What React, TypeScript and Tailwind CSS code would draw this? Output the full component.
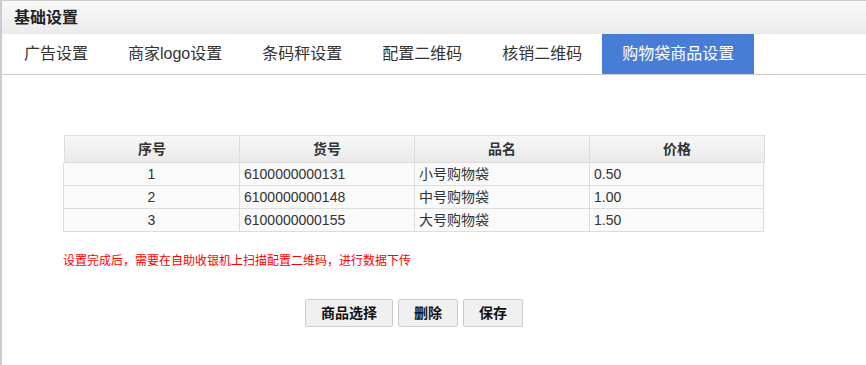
import React from "react";

const font = { fontFamily: '"Liberation Sans", "Noto Sans CJK SC", sans-serif' };

const tabs = ["广告设置", "商家logo设置", "条码秤设置", "配置二维码", "核销二维码", "购物袋商品设置"];
const rows = [
  ["1", "6100000000131", "小号购物袋", "0.50"],
  ["2", "6100000000148", "中号购物袋", "1.00"],
  ["3", "6100000000155", "大号购物袋", "1.50"],
];
const heads = ["序号", "货号", "品名", "价格"];

export default function App() {
  return (
    <div
      className="w-[866px] h-[365px] overflow-hidden bg-white border-l-2 border-t border-[#cccccc] text-[#333333]"
      style={font}
    >
      <div className="h-[33px] pl-[12px] flex items-center bg-gradient-to-b from-[#f9f9f9] to-[#ebebeb] text-[16px] font-bold text-[#222222]">
        基础设置
      </div>
      <div className="flex h-[41px] pl-[2px] border-b border-[#cccccc]">
        {tabs.map((t, i) => (
          <div
            key={t}
            className={
              i === tabs.length - 1
                ? "h-[40px] px-[20px] flex items-center text-[16px] bg-[#477dd5] text-white"
                : "h-[40px] px-[20px] flex items-center text-[16px] text-[#333333]"
            }
          >
            {t}
          </div>
        ))}
      </div>
      <div className="ml-[61px] pt-[60px] w-[702px]">
        <div className="grid grid-cols-[176px_175px_175px_175px] pl-[1px]">
          {heads.map((h, i) => (
            <div
              key={h}
              className={
                "h-[28px] flex items-center justify-center text-[14px] font-bold border-t border-b border-r border-[#dddddd] bg-gradient-to-b from-[#f7f7f7] to-[#eaeaea] " +
                (i === 0 ? "border-l" : "")
              }
            >
              {h}
            </div>
          ))}
        </div>
        {rows.map((r) => (
          <div key={r[0]} className="grid grid-cols-[177px_175px_175px_174px] bg-[#fafafa]">
            {r.map((c, i) => (
              <div
                key={i}
                className={
                  "h-[23px] flex items-center text-[14px] border-b border-r border-[#dddddd] " +
                  (i === 0 ? "border-l justify-center" : "pl-[4px]")
                }
              >
                {c}
              </div>
            ))}
          </div>
        ))}
        <div className="mt-[20px] text-[12px] leading-[18px] text-[#ff0000]">
          设置完成后，需要在自助收银机上扫描配置二维码，进行数据下传
        </div>
        <div className="mt-[29px] flex justify-center gap-[5px]">
          {["商品选择", "删除", "保存"].map((b) => (
            <button
              key={b}
              className="h-[28px] px-[15px] text-[14px] font-bold text-[#111111] bg-[#f0f0f0] border border-[#cccccc] rounded-[2px]"
              style={font}
            >
              {b}
            </button>
          ))}
        </div>
      </div>
    </div>
  );
}
